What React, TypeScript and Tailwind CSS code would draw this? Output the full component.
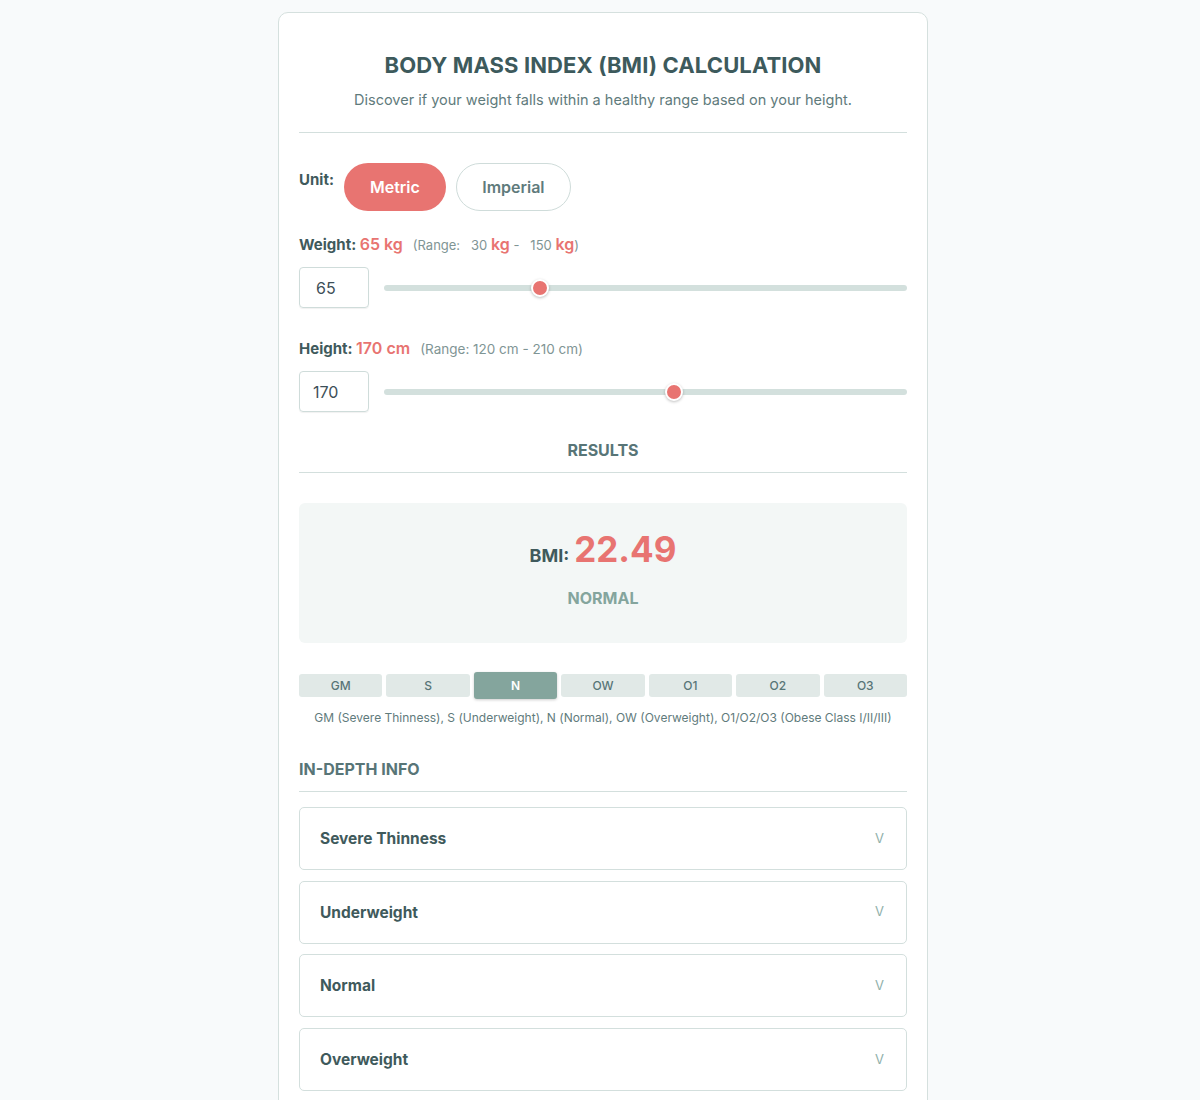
import React from "react";

function Slider({ frac }: { frac: number }) {
  return (
    <div className="relative flex-1 h-[18px] flex items-center">
      <div className="w-full h-[6px] rounded-full bg-[#d3e0dd]" />
      <div
        className="absolute top-0 w-[18px] h-[18px] rounded-full bg-[#e87471] border-2 border-white shadow-[0_1px_3px_rgba(0,0,0,0.25)]"
        style={{ left: `calc(${frac} * (100% - 18px))` }}
      />
    </div>
  );
}

const cats = ["GM", "S", "N", "OW", "O1", "O2", "O3"];
const acc = ["Severe Thinness", "Underweight", "Normal", "Overweight"];

export default function App() {
  return (
    <div className="min-h-[1100px] bg-[#f8fafb] font-['Inter',sans-serif] text-[#3f5a5c]">
      <div className="pt-3 pl-[6px] flex justify-center">
        <div className="w-[650px] bg-white border border-[#d5e0de] rounded-[10px] px-5 pt-[37px] pb-10">
          <h1 className="text-center text-[22px] leading-[30px] font-bold tracking-[0.1px] text-[#3d5a5c]">
            BODY MASS INDEX (BMI) CALCULATION
          </h1>
          <p className="text-center text-[14.5px] leading-[20px] mt-[10px] text-[#5f7b7c]">
            Discover if your weight falls within a healthy range based on your height.
          </p>
          <div className="mt-[22px] h-px bg-[#d3dfdd]" />

          <div className="mt-[30px] flex items-start gap-[10px]">
            <span className="text-[15px] font-bold pt-[8px] leading-[18px]">Unit:</span>
            <button className="w-[102px] h-[48px] rounded-[24px] bg-[#e87471] text-white text-[16px] font-semibold">
              Metric
            </button>
            <button className="w-[115px] h-[48px] rounded-[24px] bg-white border border-[#cfdcda] text-[#5f7b7c] text-[16px] font-semibold">
              Imperial
            </button>
          </div>

          <div className="mt-[22px] text-[15px] leading-[22px] flex items-baseline whitespace-pre">
            <span className="font-bold">Weight: </span>
            <span className="text-[#e87471] text-[16px] font-semibold">65 kg</span>
            <span className="text-[13px] text-[#7f9595] ml-[10px]">(Range:   30 </span>
            <span className="text-[#e87471] text-[16px] font-semibold">kg</span>
            <span className="text-[13px] text-[#7f9595]"> -   150 </span>
            <span className="text-[#e87471] text-[16px] font-semibold">kg</span>
            <span className="text-[13px] text-[#7f9595]">)</span>
          </div>
          <div className="mt-[11px] flex items-center gap-[15px]">
            <div className="w-[70px] h-[41px] border border-[#cfdcda] rounded-[4px] shadow-[0_1px_1px_rgba(0,0,0,0.06)] flex items-center px-4 text-[16px] text-[#3d4f58]">
              65
            </div>
            <Slider frac={35 / 120} />
          </div>

          <div className="mt-[29px] text-[15px] leading-[22px] flex items-baseline whitespace-pre">
            <span className="font-bold">Height: </span>
            <span className="text-[#e87471] text-[16px] font-semibold">170 cm</span>
            <span className="text-[13.5px] text-[#7f9595] ml-[10px]">(Range: 120 cm - 210 cm)</span>
          </div>
          <div className="mt-[11px] flex items-center gap-[15px]">
            <div className="w-[70px] h-[41px] border border-[#cfdcda] rounded-[4px] shadow-[0_1px_1px_rgba(0,0,0,0.06)] flex items-center px-[13px] text-[16px] text-[#3d4f58]">
              170
            </div>
            <Slider frac={50 / 90} />
          </div>

          <div className="mt-[28px] text-center text-[16px] font-bold text-[#587577] leading-[20px]">RESULTS</div>
          <div className="mt-[12px] h-px bg-[#d3dfdd]" />

          <div className="mt-[30px] h-[140px] rounded-[6px] bg-[#f3f7f6] flex flex-col items-center pt-[24px]">
            <div className="flex items-baseline gap-[5px]">
              <span className="text-[18px] font-bold text-[#3f5a5c]">BMI:</span>
              <span className="text-[35px] font-bold text-[#e87471] leading-[44px]">22.49</span>
            </div>
            <div className="mt-[17px] text-[16px] font-bold text-[#84a59d] leading-[20px]">NORMAL</div>
          </div>

          <div className="mt-[31px] grid grid-cols-7 gap-[4px] h-[23px] items-stretch">
            {cats.map((c) =>
              c === "N" ? (
                <div
                  key={c}
                  className="-my-[2px] rounded-[3px] bg-[#84a59d] text-white text-[12px] font-semibold flex items-center justify-center shadow-[0_1px_3px_rgba(0,0,0,0.2)]"
                >
                  {c}
                </div>
              ) : (
                <div
                  key={c}
                  className="rounded-[3px] bg-[#e1e9e7] text-[#587577] text-[12px] font-medium flex items-center justify-center"
                >
                  {c}
                </div>
              )
            )}
          </div>
          <p className="mt-[13px] text-center text-[12px] text-[#5f7b7c] leading-[16px]">
            GM (Severe Thinness), S (Underweight), N (Normal), OW (Overweight), O1/O2/O3 (Obese Class I/II/III)
          </p>

          <div className="mt-[33px] text-[16px] font-bold text-[#587577] leading-[20px]">IN-DEPTH INFO</div>
          <div className="mt-[12px] h-px bg-[#d3dfdd]" />

          <div className="mt-[15px] flex flex-col gap-[10.7px]">
            {acc.map((a) => (
              <div
                key={a}
                className="h-[63px] border border-[#d3dfdd] rounded-[5px] flex items-center justify-between pl-5 pr-[22px]"
              >
                <span className="text-[15.5px] font-bold text-[#3f5a5c]">{a}</span>
                <span className="text-[13px] text-[#8fb0aa]">V</span>
              </div>
            ))}
          </div>
        </div>
      </div>
    </div>
  );
}
